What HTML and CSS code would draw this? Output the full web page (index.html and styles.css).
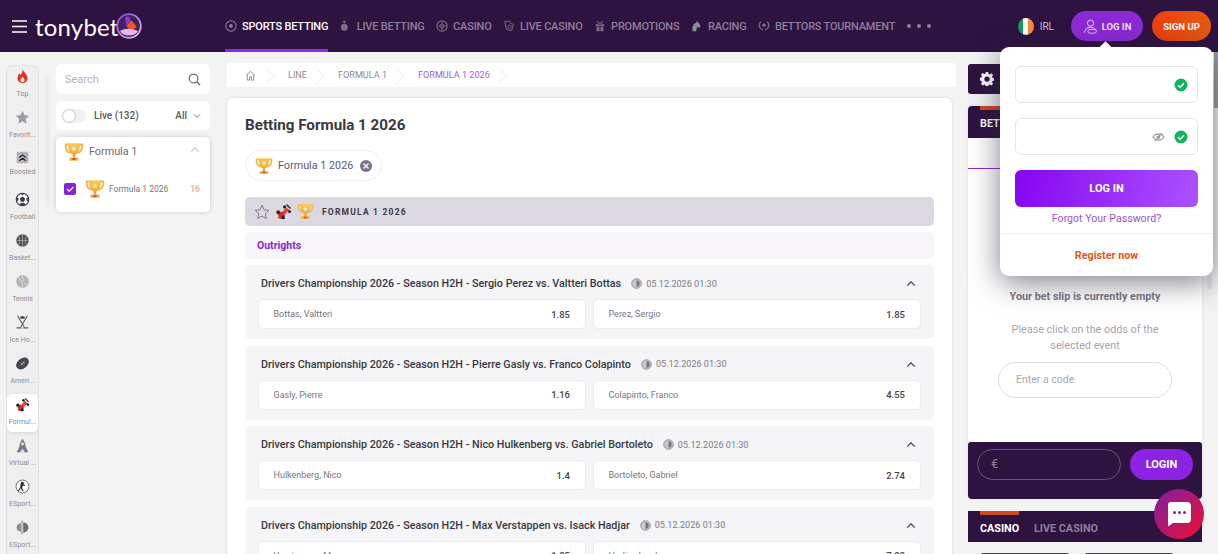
FILE: index.html
```html
<!DOCTYPE html>
<html lang="en">
<head>
<meta charset="utf-8">
<title>Betting Formula 1 2026</title>
<link rel="stylesheet" href="styles.css">
</head>
<body>
<svg class="defs" width="0" height="0" aria-hidden="true">
  <defs>
    <linearGradient id="gold" x1="0" y1="0" x2="0" y2="1"><stop offset="0" stop-color="#f8cb5a"/><stop offset="1" stop-color="#f0a93c"/></linearGradient>
    <symbol id="trophy" viewBox="0 0 24 24">
      <path d="M6 3H2C1.600 8 3.500 12 8 13M18 3h4c.4 5-1.500 9-6 10" fill="none" stroke="#f3b64a" stroke-width="2.200"/>
      <path d="M5 1.500h14c.3 6.500-1 11.500-5 13.500h-4C6 13 4.700 8 5 1.500z" fill="url(#gold)"/>
      <path d="M12 4.500l1.100 2.400 2.500.2-1.900 1.600.6 2.500-2.300-1.300-2.300 1.300.6-2.500-1.900-1.600 2.500-.2z" fill="#fde9b4"/>
      <rect x="10.500" y="14.500" width="3" height="4" fill="#e9a13a"/>
      <rect x="6.500" y="18.500" width="11" height="4" rx=".6" fill="#f2b24a"/>
      <rect x="10" y="19.300" width="4" height="2.300" fill="#c8562c"/>
    </symbol>
    <symbol id="car" viewBox="0 0 24 24">
      <path d="M3.500 20.500L16 6l4 4L7.500 23z" fill="#d8453c"/>
      <path d="M8.500 11.500l6 6-5 5-6-6z" fill="#c4352d"/>
      <circle cx="4.500" cy="13" r="2.600" fill="#26222a"/><circle cx="11.500" cy="20.500" r="2.600" fill="#26222a"/>
      <circle cx="13.500" cy="5.500" r="2.200" fill="#26222a"/><circle cx="20.500" cy="12" r="2.200" fill="#26222a"/>
      <path d="M17 1.500l5.500 5.500-1.500 1.500-5.500-5.500z" fill="#3a3438"/>
    </symbol>
    <symbol id="clock" viewBox="0 0 12 12">
      <circle cx="6" cy="6" r="5.200" fill="#c9c7cb" stroke="#8b8a90"/>
      <path d="M6 2.500a3.500 3.500 0 0 1 0 7z" fill="#77757c"/>
    </symbol>
    <symbol id="up" viewBox="0 0 12 8">
      <path d="M1.500 6.500L6 2l4.500 4.500" fill="none" stroke="currentColor" stroke-width="1.400"/>
    </symbol>
    <symbol id="tick" viewBox="0 0 14 14">
      <circle cx="7" cy="7" r="6.500" fill="#0fb45c"/>
      <path d="M4 7.200l2.200 2.100L10 5.300" fill="none" stroke="#fff" stroke-width="1.500"/>
    </symbol>
  </defs>
</svg>

<header class="topbar">
  <svg class="burger" viewBox="0 0 15 13"><path d="M0 1h15M0 6.500h15M0 12h15" stroke="#fff" stroke-width="1.600"/></svg>
  <span class="logo-text">tonybet</span>
  <svg class="logo-mark" viewBox="0 0 26 26">
    <defs><linearGradient id="lm" x1="0" y1="0" x2="1" y2="1"><stop offset="0" stop-color="#8a3fd8"/><stop offset="1" stop-color="#e8c4f4"/></linearGradient></defs>
    <circle cx="13" cy="13" r="11.800" fill="#40205f" stroke="url(#lm)" stroke-width="1.800"/>
    <path d="M9 4.500c3-2 6-.5 5 3l-3.500 6z" fill="#8a36d8"/>
    <path d="M10.500 13.500L15 7l6 7-6 3z" fill="#ef5a1e"/>
    <path d="M4 18c5-3 12-3 18 0-3 6-15 6-18 0z" fill="#e8b4e8"/>
  </svg>
  <nav class="mainnav">
    <a class="navitem active">
      <svg class="navicon" viewBox="0 0 14 14"><circle cx="7" cy="7" r="6" fill="none" stroke="#8f8597" stroke-width="1.200"/><path d="M7 4.500l2.300 1.700-.9 2.700H5.600l-.9-2.700z" fill="#8f8597"/></svg>SPORTS BETTING
    </a>
    <a class="navitem">
      <svg class="navicon" viewBox="0 0 14 14"><circle cx="5" cy="8.500" r="4" fill="#7b6d85"/><path d="M5 4V1.500M3 1.500h4" stroke="#7b6d85" stroke-width="1.300"/></svg>LIVE BETTING
    </a>
    <a class="navitem">
      <svg class="navicon" viewBox="0 0 14 14"><circle cx="7" cy="7" r="6" fill="none" stroke="#7b6d85" stroke-width="1.300"/><circle cx="7" cy="7" r="2.500" fill="none" stroke="#7b6d85"/><path d="M7 1v12M1 7h12" stroke="#7b6d85" stroke-width=".8"/></svg>CASINO
    </a>
    <a class="navitem">
      <svg class="navicon" viewBox="0 0 14 14"><path d="M2 1.500h6l1 2.500 3 1-2 7.500-6-1.500z" fill="none" stroke="#7b6d85" stroke-width="1.100"/><circle cx="7.500" cy="8" r="2" fill="none" stroke="#7b6d85"/></svg>LIVE CASINO
    </a>
    <a class="navitem">
      <svg class="navicon" viewBox="0 0 14 14"><path d="M2 5h4.500v2.500H2zM7.500 5H12v2.500H7.500zM3 8.500h3.500V13H3zM7.500 8.500H11V13H7.500z" fill="#7b6d85"/><path d="M4 1.500L6.500 4.500M10 1.500L7.500 4.500" stroke="#7b6d85" stroke-width="1.300"/></svg>PROMOTIONS
    </a>
    <a class="navitem">
      <svg class="navicon" viewBox="0 0 14 14"><path d="M2 13c-1-4 0-8 4-10l1-2 1 2c2 1 3 3 3 5l-2 1-2-1-1 5z" fill="#8c8f8c"/></svg>RACING
    </a>
    <a class="navitem">
      <svg class="navicon" viewBox="0 0 14 14"><path d="M3 2C0 6 2 11 6 11.500M11 2c3 4 1 9-3 9.500" fill="none" stroke="#7b6d85" stroke-width="1.500"/><circle cx="7" cy="6" r="2" fill="#7b6d85"/></svg>BETTORS TOURNAMENT
    </a>
    <span class="navmore"><i></i><i></i><i></i></span>
  </nav>
  <div class="topright">
    <span class="flag"><i class="flag-g"></i><i class="flag-w"></i><i class="flag-o"></i></span>
    <span class="country">IRL</span>
    <a class="btn-login">
      <svg class="user" viewBox="0 0 18 18"><circle cx="9" cy="5" r="3.700" fill="none" stroke="#f1dcff" stroke-width="1.100"/><path d="M2 16.500c0-4 2.500-6.500 7-6.500 3 0 5 1 6 3" fill="none" stroke="#f1dcff" stroke-width="1.100"/><rect x="6" y="12.500" width="10" height="4.500" rx="2.200" fill="none" stroke="#f1dcff"/></svg>LOG IN
    </a>
    <a class="btn-signup">SIGN UP</a>
  </div>
</header>

<div class="page">
  <aside class="rail">
    <a class="rail-item"><svg viewBox="0 0 16 18"><path d="M8 0c1 4 6 6 6 11a6 6 0 0 1-12 0c0-3 1.500-4 2-6 1 1 1.500 2 2 2 1-2 2.500-4 2-7z" fill="#ea2c21"/><path d="M8 9c1 2 2.500 2.500 2.500 4.500a2.500 2.500 0 0 1-5 0C5.500 12 7.500 11 8 9z" fill="#fff"/></svg><span>Top</span></a>
    <a class="rail-item"><svg viewBox="0 0 18 18"><path d="M9 1l2.400 5.300 5.600.6-4.200 3.900 1.200 5.700L9 13.600l-5 2.900 1.200-5.700L1 6.900l5.600-.6z" fill="#9c9aa3"/></svg><span>Favorit...</span></a>
    <a class="rail-item boosted"><svg viewBox="0 0 18 18"><rect x="2" y="2" width="14" height="14" rx="2" fill="#b4b2b8"/><path d="M5 9l4-3 4 3M5 13l4-3 4 3" fill="none" stroke="#2e2a33" stroke-width="1.500"/></svg><span>Boosted</span></a>
    <a class="rail-item"><svg viewBox="0 0 18 18"><circle cx="9" cy="9" r="7.500" fill="#fff" stroke="#3a373e" stroke-width="1.400"/><path d="M9 5.500l3.200 2.400-1.200 3.700H7L5.800 7.900z" fill="#3a373e"/><path d="M7 1.800L9 3.500l2-1.700M2 7l2 1-1 3M16 7l-2 1 1 3M6 16l1-2.500h4l1 2.500" fill="#3a373e" stroke="#3a373e"/></svg><span>Football</span></a>
    <a class="rail-item"><svg viewBox="0 0 18 18"><circle cx="9" cy="9" r="7.500" fill="#55535a"/><path d="M2 9h14M9 1.500v15M3.500 3.500c3 2.500 3 8.500 0 11M14.500 3.500c-3 2.500-3 8.500 0 11" fill="none" stroke="#b5b3b8" stroke-width=".8"/></svg><span>Basket...</span></a>
    <a class="rail-item"><svg viewBox="0 0 18 18"><circle cx="9" cy="9" r="7.500" fill="#b5b3b8"/><path d="M3 4c4 2 6 6 6 12M15 14c-4-2-6-6-6-12" fill="none" stroke="#e5e4e7" stroke-width="1"/></svg><span>Tennis</span></a>
    <a class="rail-item"><svg viewBox="0 0 18 18"><path d="M3 1l8 13M15 1L7 14" stroke="#56545a" stroke-width="1.300"/><path d="M2 15.500h6M10 15.500h6" stroke="#56545a" stroke-width="1.600"/><ellipse cx="9" cy="3" rx="3" ry="1.500" fill="#3a373e"/></svg><span>Ice Ho...</span></a>
    <a class="rail-item"><svg viewBox="0 0 18 18"><ellipse cx="9" cy="9" rx="8.500" ry="6" transform="rotate(-40 9 9)" fill="#47444c"/><path d="M6.500 11.500l5-5M7 8l3 3M9 6.500l3 3" stroke="#d8d7da" stroke-width=".8"/></svg><span>Ameri...</span></a>
    <a class="rail-item selected"><svg viewBox="0 0 24 24"><use href="#car"/></svg><span>Formul...</span></a>
    <a class="rail-item"><svg viewBox="0 0 18 18"><path d="M9 1l3 5 1 5 3 6H2l3-6 1-5z" fill="#7b797f"/><circle cx="9" cy="7" r="2" fill="#d8d7da"/><path d="M6 17l3-4 3 4" fill="#e5e4e7"/></svg><span>Virtual ...</span></a>
    <a class="rail-item"><svg viewBox="0 0 18 18"><circle cx="9" cy="9" r="7.800" fill="#fff" stroke="#58565c" stroke-width="1"/><path d="M8 3l2.500 1v2.500l2 1-1 .8-2-.6-1 3 2 4H9l-2-3.500-2.500 3.500-1-.5 3-5V6.500z" fill="#2a282e"/></svg><span>ESport...</span></a>
    <a class="rail-item"><svg viewBox="0 0 18 18"><path d="M7 1h3v16H7z" fill="#bdbbc0"/><path d="M10 3c4 0 6 3 6 6s-2 6-6 6z" fill="#6f6d73"/><path d="M7 4C4 4 2 6 2 9s2 5 5 5z" fill="#8b8990"/></svg><span>ESport...</span></a>
  </aside>
  <div class="rail-scroll"><i></i></div>

  <aside class="filters">
    <div class="panel search">
      <span class="search-text">Search</span>
      <svg class="search-icon" viewBox="0 0 14 14"><circle cx="6" cy="6" r="4.700" fill="none" stroke="#55535a" stroke-width="1.100"/><path d="M9.500 9.500L13 13" stroke="#55535a" stroke-width="1.300"/></svg>
    </div>
    <div class="panel live">
      <span class="toggle"><i></i></span>
      <span class="live-label">Live (132)</span>
      <span class="live-all">All</span>
      <svg class="live-caret" viewBox="0 0 12 8"><path d="M1.500 1.500L6 6l4.500-4.500" fill="none" stroke="#55565f" stroke-width="1.200"/></svg>
    </div>
    <div class="panel sport">
      <div class="sport-head">
        <svg class="trophy-lg"><use href="#trophy"/></svg>
        <span class="sport-name">Formula 1</span>
        <svg class="sport-caret"><use href="#up"/></svg>
      </div>
      <div class="sport-row">
        <span class="check"><svg viewBox="0 0 12 12"><path d="M3 6l2.200 2.200L9.500 4" fill="none" stroke="#fff" stroke-width="1.100"/></svg></span>
        <svg class="trophy-lg"><use href="#trophy"/></svg>
        <span class="sport-league">Formula 1 2026</span>
        <span class="sport-count">16</span>
      </div>
    </div>
  </aside>

  <main class="center">
    <nav class="crumbs">
      <a class="crumb home"><svg viewBox="0 0 12 12"><path d="M1 6l5-4.500L11 6M2.500 5v6H5V7.500h2V11h2.500V5" fill="none" stroke="#7b7986" stroke-width=".9"/></svg></a>
      <a class="crumb">LINE</a>
      <a class="crumb">FORMULA 1</a>
      <a class="crumb current">FORMULA 1 2026</a>
    </nav>
    <section class="content">
      <h1>Betting Formula 1 2026</h1>
      <div class="chip">
        <svg class="trophy-chip"><use href="#trophy"/></svg>
        <span>Formula 1 2026</span>
        <span class="chip-x"><svg viewBox="0 0 12 12"><path d="M3.500 3.500l5 5M8.500 3.500l-5 5" stroke="#fff" stroke-width="1.300"/></svg></span>
      </div>
      <div class="league-bar">
        <svg class="league-star" viewBox="0 0 18 18"><path d="M9 1.500l2.300 5 5.400.6-4 3.700 1.100 5.400L9 13.500l-4.800 2.700 1.100-5.400-4-3.700 5.400-.6z" fill="none" stroke="#7e7589" stroke-width="1.100"/></svg>
        <svg class="league-ic"><use href="#car"/></svg>
        <svg class="league-ic"><use href="#trophy"/></svg>
        <span class="league-name">FORMULA 1 2026</span>
      </div>
      <div class="outrights">Outrights</div>

      <article class="market">
        <div class="market-head"><b>Drivers Championship 2026 - Season H2H - Sergio Perez vs. Valtteri Bottas</b><svg class="clock"><use href="#clock"/></svg><time>05.12.2026 01:30</time><svg class="market-caret"><use href="#up"/></svg></div>
        <div class="odds"><a class="odd"><span>Bottas, Valtteri</span><b>1.85</b></a><a class="odd"><span>Perez, Sergio</span><b>1.85</b></a></div>
      </article>
      <article class="market">
        <div class="market-head"><b>Drivers Championship 2026 - Season H2H - Pierre Gasly vs. Franco Colapinto</b><svg class="clock"><use href="#clock"/></svg><time>05.12.2026 01:30</time><svg class="market-caret"><use href="#up"/></svg></div>
        <div class="odds"><a class="odd"><span>Gasly, Pierre</span><b>1.16</b></a><a class="odd"><span>Colapinto, Franco</span><b>4.55</b></a></div>
      </article>
      <article class="market">
        <div class="market-head"><b>Drivers Championship 2026 - Season H2H - Nico Hulkenberg vs. Gabriel Bortoleto</b><svg class="clock"><use href="#clock"/></svg><time>05.12.2026 01:30</time><svg class="market-caret"><use href="#up"/></svg></div>
        <div class="odds"><a class="odd"><span>Hulkenberg, Nico</span><b>1.4</b></a><a class="odd"><span>Bortoleto, Gabriel</span><b>2.74</b></a></div>
      </article>
      <article class="market">
        <div class="market-head"><b>Drivers Championship 2026 - Season H2H - Max Verstappen vs. Isack Hadjar</b><svg class="clock"><use href="#clock"/></svg><time>05.12.2026 01:30</time><svg class="market-caret"><use href="#up"/></svg></div>
        <div class="odds"><a class="odd"><span>Verstappen, Max</span><b>1.05</b></a><a class="odd"><span>Hadjar, Isack</span><b>7.00</b></a></div>
      </article>
    </section>
  </main>

  <aside class="slip">
    <div class="settings"><svg viewBox="0 0 16 16"><path d="M6.600 0h2.800l.4 2.200 1.300.6 1.900-1.300 2 2-1.300 1.900.6 1.300 2.200.4v2.800l-2.200.4-.6 1.300 1.300 1.900-2 2-1.900-1.300-1.300.6-.4 2.200H6.600l-.4-2.200-1.300-.6-1.900 1.300-2-2 1.300-1.900-.6-1.300L-.5 9.400V6.600l2.200-.4.6-1.300L1 3l2-2 1.900 1.300 1.300-.6zM8 5a3 3 0 1 0 0 6 3 3 0 0 0 0-6z" fill="#fff"/></svg></div>
    <div class="slip-card">
      <div class="slip-head"><span class="tab-on">BET</span></div>
      <div class="slip-tabs"></div>
      <div class="slip-body">
        <strong>Your bet slip is currently empty</strong>
        <p>Please click on the odds of the selected event</p>
        <div class="code">Enter a code</div>
      </div>
      <div class="slip-foot">
        <div class="amount">€</div>
        <a class="foot-login">LOGIN</a>
      </div>
    </div>
    <div class="casino">
      <span class="tab-on casino-on">CASINO</span>
      <span class="casino-off">LIVE CASINO</span>
    </div>
    <div class="thumbs"><i></i><i></i></div>
  </aside>
  <div class="slip-scroll"><i></i></div>
  <div class="window-scroll"><i></i></div>
</div>

<div class="popup">
  <div class="popup-form">
    <div class="field"><svg class="tick"><use href="#tick"/></svg></div>
    <div class="field"><svg class="eye" viewBox="0 0 14 10"><path d="M1 5c3-4.500 9-4.500 12 0-3 4.500-9 4.500-12 0z" fill="none" stroke="#9a9aa0" stroke-width="1.100"/><circle cx="7" cy="5" r="2" fill="#9a9aa0"/><path d="M3 9.500L11 .5" stroke="#9a9aa0" stroke-width="1.200"/></svg><svg class="tick"><use href="#tick"/></svg></div>
    <a class="popup-btn">LOG IN</a>
    <a class="forgot">Forgot Your Password?</a>
  </div>
  <a class="register">Register now</a>
</div>

<a class="chat"><svg viewBox="0 0 26 26"><path d="M5 1h16a4 4 0 0 1 4 4v13a4 4 0 0 1-4 4H7l-5 3.500V4a3 3 0 0 1 3-3z" fill="#fff"/><circle cx="8.500" cy="11.500" r="1.500" fill="#7b1fa2"/><circle cx="13.500" cy="11.500" r="1.500" fill="#7b1fa2"/><circle cx="18.500" cy="11.500" r="1.500" fill="#7b1fa2"/></svg></a>
</body>
</html>
```
FILE: styles.css
```css
* { box-sizing: border-box; }
html, body { height: 100%; }
body {
  margin: 0;
  height: 554px;
  overflow: hidden;
  background: #f3f3f4;
  font-family: Roboto, "Liberation Sans", sans-serif;
  color: #333;
  position: relative;
}
a { color: inherit; text-decoration: none; }
.defs { position: absolute; }

.topbar {
  height: 52px;
  background: #2e1240;
  display: flex;
  align-items: center;
  padding-left: 12px;
}
.burger { width: 15px; height: 13px; margin-right: 8px; }
.logo-text {
  font-family: "Lato", sans-serif;
  font-size: 24px;
  color: #fff;
  width: 81px;
  letter-spacing: .2px;
}
.logo-mark { width: 26px; height: 26px; margin-right: 83px; }
.mainnav { display: flex; align-items: stretch; height: 52px; flex: 1; }
.navitem {
  display: flex;
  align-items: center;
  font-size: 11px;
  letter-spacing: -.2px;
  font-weight: 500;
  color: #8f7f9b;
  margin-right: 11.500px;
  white-space: nowrap;
}
.navicon { width: 12px; height: 12px; margin-right: 5px; }
.navitem.active {
  color: #fff;
  border-bottom: 3px solid #8c2be2;
  padding-top: 3px;
}
.navmore { display: flex; align-items: center; gap: 6px; margin-left: 0; }
.navmore i { width: 4px; height: 4px; border-radius: 50%; background: #8f7f9b; }
.topright { display: flex; align-items: center; padding-right: 7px; }
.flag { width: 16px; height: 17px; border-radius: 50%; overflow: hidden; display: flex; }
.flag i { flex: 1; }
.flag-g { background: #169b62; }
.flag-w { background: #fff; }
.flag-o { background: #ff883e; }
.country { font-size: 10px; color: #c9bfd1; margin: 0 17px 0 6px; }
.btn-login, .btn-signup {
  height: 30px;
  border-radius: 15px;
  display: flex;
  align-items: center;
  justify-content: center;
  color: #fff;
  font-size: 9.500px;
  font-weight: 700;
}
.btn-login { width: 72px; background: #8c2ad8; color: #f1e3fb; margin-right: 9px; }
.user { width: 15px; height: 15px; margin-right: 4px; }
.btn-signup { width: 59px; background: linear-gradient(90deg, #f03f0c, #e55a10); }

.page { display: flex; align-items: flex-start; height: 502px; overflow: hidden; padding: 13px 0 0 6px; }

.rail {
  width: 33px;
  height: 489px;
  flex: none;
  background: #efeff0;
  border: 1px solid #e2e2e4;
  border-bottom: 0;
  border-radius: 7px 7px 0 0;
  display: flex;
  flex-direction: column;
  align-items: stretch;
  overflow: hidden;
  padding-top: 2px;
}
.rail-item {
  height: 41px;
  flex: none;
  display: flex;
  flex-direction: column;
  align-items: center;
  font-size: 7px;
  color: #8d8a94;
  padding-top: 1px;
  white-space: nowrap;
}
.rail-item svg { width: 15px; height: 15px; margin-bottom: 6px; flex: none; }
.rail-item.boosted { padding-top: 0; }
.rail-item.boosted svg { margin-bottom: 3px; }
.rail-item.selected {
  background: #fff;
  border-radius: 5px;
  height: 38px;
  margin-top: -2px;
  margin-bottom: 5px;
  padding-top: 3px;
  box-shadow: 0 1px 4px rgba(0, 0, 0, .12);
}
.rail-scroll { width: 5px; margin: -3px 6px 0 6px; height: 130px; flex: none; }
.rail-scroll i { display: block; width: 5px; height: 130px; margin-top: 15px; background: #ececed; border-radius: 3px; }

.filters { width: 154px; flex: none; margin-right: 17px; display: flex; flex-direction: column; gap: 7px; margin-top: -1px; }
.panel { background: #fff; border-radius: 5px; }
.search { height: 30px; display: flex; align-items: center; justify-content: space-between; padding: 0 9px; }
.search-text { font-size: 11px; color: #b5b3bb; }
.search-icon { width: 13px; height: 13px; }
.live { height: 29px; display: flex; align-items: center; padding: 0 9px 0 6px; }
.toggle { width: 24px; height: 14px; border-radius: 7px; background: #f1f1f2; flex: none; margin-right: 8px; }
.toggle i { display: block; width: 12px; height: 12px; margin: 1px; border-radius: 50%; background: #fff; box-shadow: 0 0 2px rgba(0, 0, 0, .45); }
.live-label { font-size: 10px; font-weight: 500; color: #585a64; flex: 1; }
.live-all { font-size: 10px; font-weight: 500; color: #585a64; margin-right: 6px; }
.live-caret { width: 8px; height: 6px; }
.sport { height: 75px; box-shadow: 0 0 5px rgba(0, 0, 0, .16); padding: 0 10px 0 8px; }
.sport-head { display: flex; align-items: center; height: 29px; }
.trophy-lg { width: 20px; height: 20px; flex: none; }
.sport-name { font-size: 10.800px; color: #6d6b75; margin-left: 5px; flex: 1; }
.sport-caret { width: 10px; height: 7px; color: #c5c4c9; margin-top: -4px; }
.sport-row { display: flex; align-items: center; margin-top: 13px; height: 20px; }
.check { width: 12px; height: 12px; background: #8224d8; border-radius: 2px; margin-right: 9px; display: flex; }
.sport-league { font-size: 8.500px; color: #77757e; margin-left: 4px; flex: 1; }
.sport-count { font-size: 8.500px; font-weight: 700; color: #eeb39a; }

.center { width: 725px; flex: none; margin-right: 16px; margin-top: -2px; }
.crumbs { height: 24px; display: flex; background: #fff; width: 729px; align-items: stretch; border-radius: 3px 3px 0 0; }
.crumb {
  font-size: 9.100px;
  color: #8b8a98;
  display: flex;
  align-items: center;
  padding: 0 17px 0 14px;
  position: relative;
}
.crumb::after {
  content: "";
  position: absolute;
  right: 0;
  top: 4px;
  width: 16px;
  height: 16px;
  border-top: 1px solid #ececee;
  border-right: 1px solid #ececee;
  transform: rotate(45deg) scale(.72);
}
.crumb.home { padding: 0 18px 0 18px; }
.crumb.home svg { width: 11px; height: 11px; }
.crumb.current { color: #a45ed4; }
.content {
  background: #fff;
  border-radius: 6px 6px 0 0;
  box-shadow: 0 0 3px rgba(0, 0, 0, .14);
  margin-top: 11px;
  padding: 16px 18px 0 18px;
  height: 500px;
}
h1 { margin: 0; font-size: 15.200px; font-weight: 700; color: #3a3a40; line-height: 22px; }
.chip {
  margin-top: 14px;
  height: 31px;
  width: 137px;
  border: 1px solid #efeff1;
  border-radius: 16px;
  display: flex;
  align-items: center;
  padding-left: 9px;
  font-size: 10.800px;
  color: #5e5c66;
}
.trophy-chip { width: 18px; height: 18px; margin-right: 5px; }
.chip-x { width: 12px; height: 12px; border-radius: 50%; background: #7e7089; margin-left: 7px; display: flex; }
.league-bar {
  margin-top: 16px;
  height: 29px;
  background: #dcd8e1;
  border-radius: 5px;
  display: flex;
  align-items: center;
  padding-left: 9px;
}
.league-star { width: 16px; height: 16px; margin-right: 5px; }
.league-ic { width: 17px; height: 17px; margin-right: 5px; }
.league-name { font-size: 8.500px; font-weight: 700; letter-spacing: 1.200px; color: #3d3a44; margin-left: 3px; }
.outrights {
  margin-top: 6px;
  height: 27px;
  line-height: 27px;
  background: #f7f5fa;
  border-radius: 5px;
  padding-left: 12px;
  font-size: 10.500px;
  font-weight: 700;
  color: #8726d4;
}
.market {
  margin-top: 6px;
  height: 74px;
  background: #f5f4f6;
  border-radius: 5px;
  padding: 0 13px;
}
.market + .market { margin-top: 6.500px; }
.market-head { height: 34px; display: flex; align-items: center; padding: 3px 2px 0 3px; }
.market-head b { font-size: 10.770px; font-weight: 500; color: #38383f; white-space: nowrap; }
.clock { width: 11px; height: 11px; margin: 0 4px 0 10px; flex: none; }
time { font-size: 9.100px; color: #7d7b85; flex: 1; }
.market-caret { width: 10px; height: 7px; color: #3a3a42; margin-right: 3px; }
.odds { display: flex; gap: 7px; }
.odd {
  flex: 1;
  height: 30px;
  background: #fff;
  border: 1px solid #ebeaed;
  border-radius: 5px;
  display: flex;
  align-items: center;
  justify-content: space-between;
  padding: 0 15px 0 14.500px;
  font-size: 9px;
  color: #77757f;
}
.odd b { font-size: 9.500px; font-weight: 500; color: #45454c; }

.slip { width: 234px; flex: none; margin-top: -1px; }
.settings {
  width: 50px;
  height: 30px;
  background: #2e1240;
  border-radius: 3px;
  display: flex;
  align-items: center;
  padding-left: 12px;
}
.settings svg { width: 14px; height: 14px; }
.slip-card { margin-top: 12px; background: #fff; border-radius: 4px; box-shadow: 0 0 3px rgba(0, 0, 0, .1); }
.slip-head {
  height: 32px;
  background: #2e1240;
  border-radius: 4px 4px 0 0;
  display: flex;
  padding-left: 12px;
}
.tab-on {
  position: relative;
  color: #fff;
  font-size: 10.800px;
  font-weight: 700;
  padding-top: 11px;
  width: 38px;
}
.tab-on::before {
  content: "";
  position: absolute;
  left: 0;
  top: 0;
  right: 0;
  height: 4px;
  background: #ce4a20;
}
.slip-tabs { height: 31px; border-bottom: 1px solid #8c2ad8; }
.slip-body {
  height: 273px;
  padding-top: 121px;
  display: flex;
  flex-direction: column;
  align-items: center;
  text-align: center;
}
.slip-body strong { font-size: 10.800px; font-weight: 700; color: #7b7785; }
.slip-body p { width: 160px; font-size: 10.800px; line-height: 15.500px; color: #a6a3ad; margin: 19px 0 9px; }
.code {
  width: 174px;
  height: 36px;
  border: 1px solid #dededf;
  border-radius: 18px;
  font-size: 10.500px;
  line-height: 34px;
  color: #a8a7ad;
  text-align: left;
  padding-left: 17px;
}
.slip-foot {
  height: 57px;
  background: #2e1240;
  border-radius: 3px 3px 4px 4px;
  display: flex;
  padding: 7px 9px 0 9px;
  justify-content: space-between;
}
.amount {
  width: 144px;
  height: 31px;
  border: 1px solid #6b5678;
  border-radius: 16px;
  color: #8f8199;
  font-size: 13px;
  line-height: 27px;
  padding-left: 13px;
}
.foot-login {
  width: 63px;
  height: 31px;
  border-radius: 16px;
  background: #8c23e2;
  color: #fff;
  font-size: 11px;
  font-weight: 700;
  text-align: center;
  line-height: 31px;
}
.casino {
  margin-top: 12px;
  height: 31px;
  background: #2e1240;
  display: flex;
  align-items: flex-start;
  padding-left: 12px;
}
.casino-on { width: 39px; padding-top: 11px; }
.casino-off { font-size: 10.800px; font-weight: 700; color: #8f7f9b; margin-left: 15px; padding-top: 11px; }
.thumbs { display: flex; padding: 11px 13px; }
.thumbs i { display: block; width: 96px; height: 8px; background: #45434a; margin-right: 16px; border-radius: 2px 2px 0 0; }
.slip-scroll { width: 5px; flex: none; margin-left: 5px; }
.slip-scroll i { display: block; width: 5px; height: 225px; background: #e4e4e6; border-radius: 3px; }
.window-scroll { width: 4px; flex: none; margin: -13px 0 0 2px; }
.window-scroll i { display: block; width: 4px; height: 56px; background: #9c9da2; }

.popup {
  position: absolute;
  left: 1000px;
  top: 47px;
  width: 213px;
  height: 229px;
  background: #fff;
  border-radius: 9px;
  box-shadow: 0 6px 30px rgba(36, 42, 58, .6);
  display: flex;
  flex-direction: column;
}
.popup::before {
  content: "";
  position: absolute;
  left: 101px;
  top: -4px;
  width: 9px;
  height: 9px;
  background: #fff;
  transform: rotate(45deg);
}
.popup-form { height: 187px; padding: 19px 15px 0; border-bottom: 1px solid #f1f1f2; display: flex; flex-direction: column; }
.field {
  height: 37px;
  border: 1px solid #e6e6e8;
  border-radius: 6px;
  margin-bottom: 15px;
  display: flex;
  align-items: center;
  justify-content: flex-end;
  padding-right: 9px;
}
.tick { width: 14px; height: 14px; }
.eye { width: 13px; height: 10px; margin-right: 9px; }
.popup-btn {
  height: 37px;
  border-radius: 6px;
  background: linear-gradient(100deg, #8705f0, #ab52ff);
  color: #fff;
  text-align: center;
  line-height: 37px;
  font-size: 11px;
  font-weight: 700;
}
.forgot { text-align: center; font-size: 10.600px; color: #9a55d2; margin-top: 5px; }
.register { text-align: center; font-size: 10.800px; font-weight: 700; color: #e0581f; margin-top: 15px; }

.chat {
  position: absolute;
  left: 1154px;
  top: 489px;
  width: 50px;
  height: 50px;
  border-radius: 50%;
  background: linear-gradient(135deg, #7c1fa6, #ef0f2f);
  display: flex;
  align-items: center;
  justify-content: center;
}
.chat svg { width: 26px; height: 26px; }
```
